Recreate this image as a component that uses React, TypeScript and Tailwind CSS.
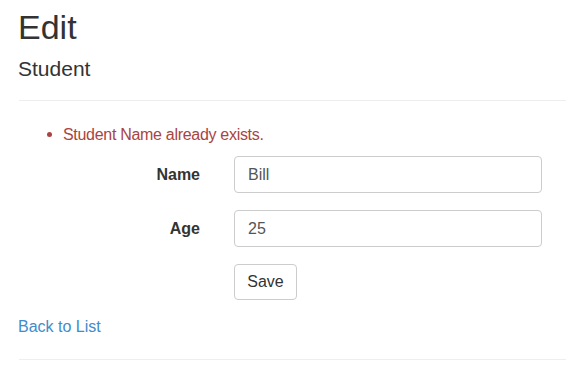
export default function App() {
  return (
    <div
      className="w-[566px] h-[382px] overflow-hidden bg-white text-[#333] pl-[18px]"
      style={{ fontFamily: '"Liberation Sans", Arial, sans-serif' }}
    >
      <h2 className="mt-[8px] text-[34px] leading-[38px] font-normal">Edit</h2>
      <h4 className="mt-[11px] text-[21px] leading-[23px] font-normal">Student</h4>
      <div className="mt-[20px] ml-[1px] border-t border-[#eee]" />
      <div className="mt-[22px] flex items-center text-[16px] leading-[23px] text-[#a94442]">
        <span className="ml-[29px] w-[5px] h-[5px] rounded-full bg-[#a94442]" />
        <span className="ml-[11px] tracking-[-0.3px]">Student Name already exists.</span>
      </div>
      <form className="mt-[10px] flex flex-col gap-[17px] text-[16px]">
        <div className="flex items-center">
          <label className="w-[182px] text-right font-bold leading-[23px]">Name</label>
          <input
            defaultValue="Bill"
            className="ml-[34px] w-[308px] h-[37px] px-[13px] border border-[#ccc] rounded-[4px] text-[#555] outline-none"
          />
        </div>
        <div className="flex items-center">
          <label className="w-[182px] text-right font-bold leading-[23px]">Age</label>
          <input
            defaultValue="25"
            className="ml-[34px] w-[308px] h-[37px] px-[13px] border border-[#ccc] rounded-[4px] text-[#555] outline-none"
          />
        </div>
        <div className="flex">
          <button
            type="button"
            className="ml-[216px] w-[63px] h-[36px] border border-[#ccc] rounded-[4px] bg-white text-[#333]"
          >
            Save
          </button>
        </div>
      </form>
      <div className="mt-[15px] text-[16px] leading-[23px]">
        <a href="#" className="text-[#428bca]">Back to List</a>
      </div>
      <div className="mt-[21px] ml-[1px] border-t border-[#eee]" />
    </div>
  );
}
